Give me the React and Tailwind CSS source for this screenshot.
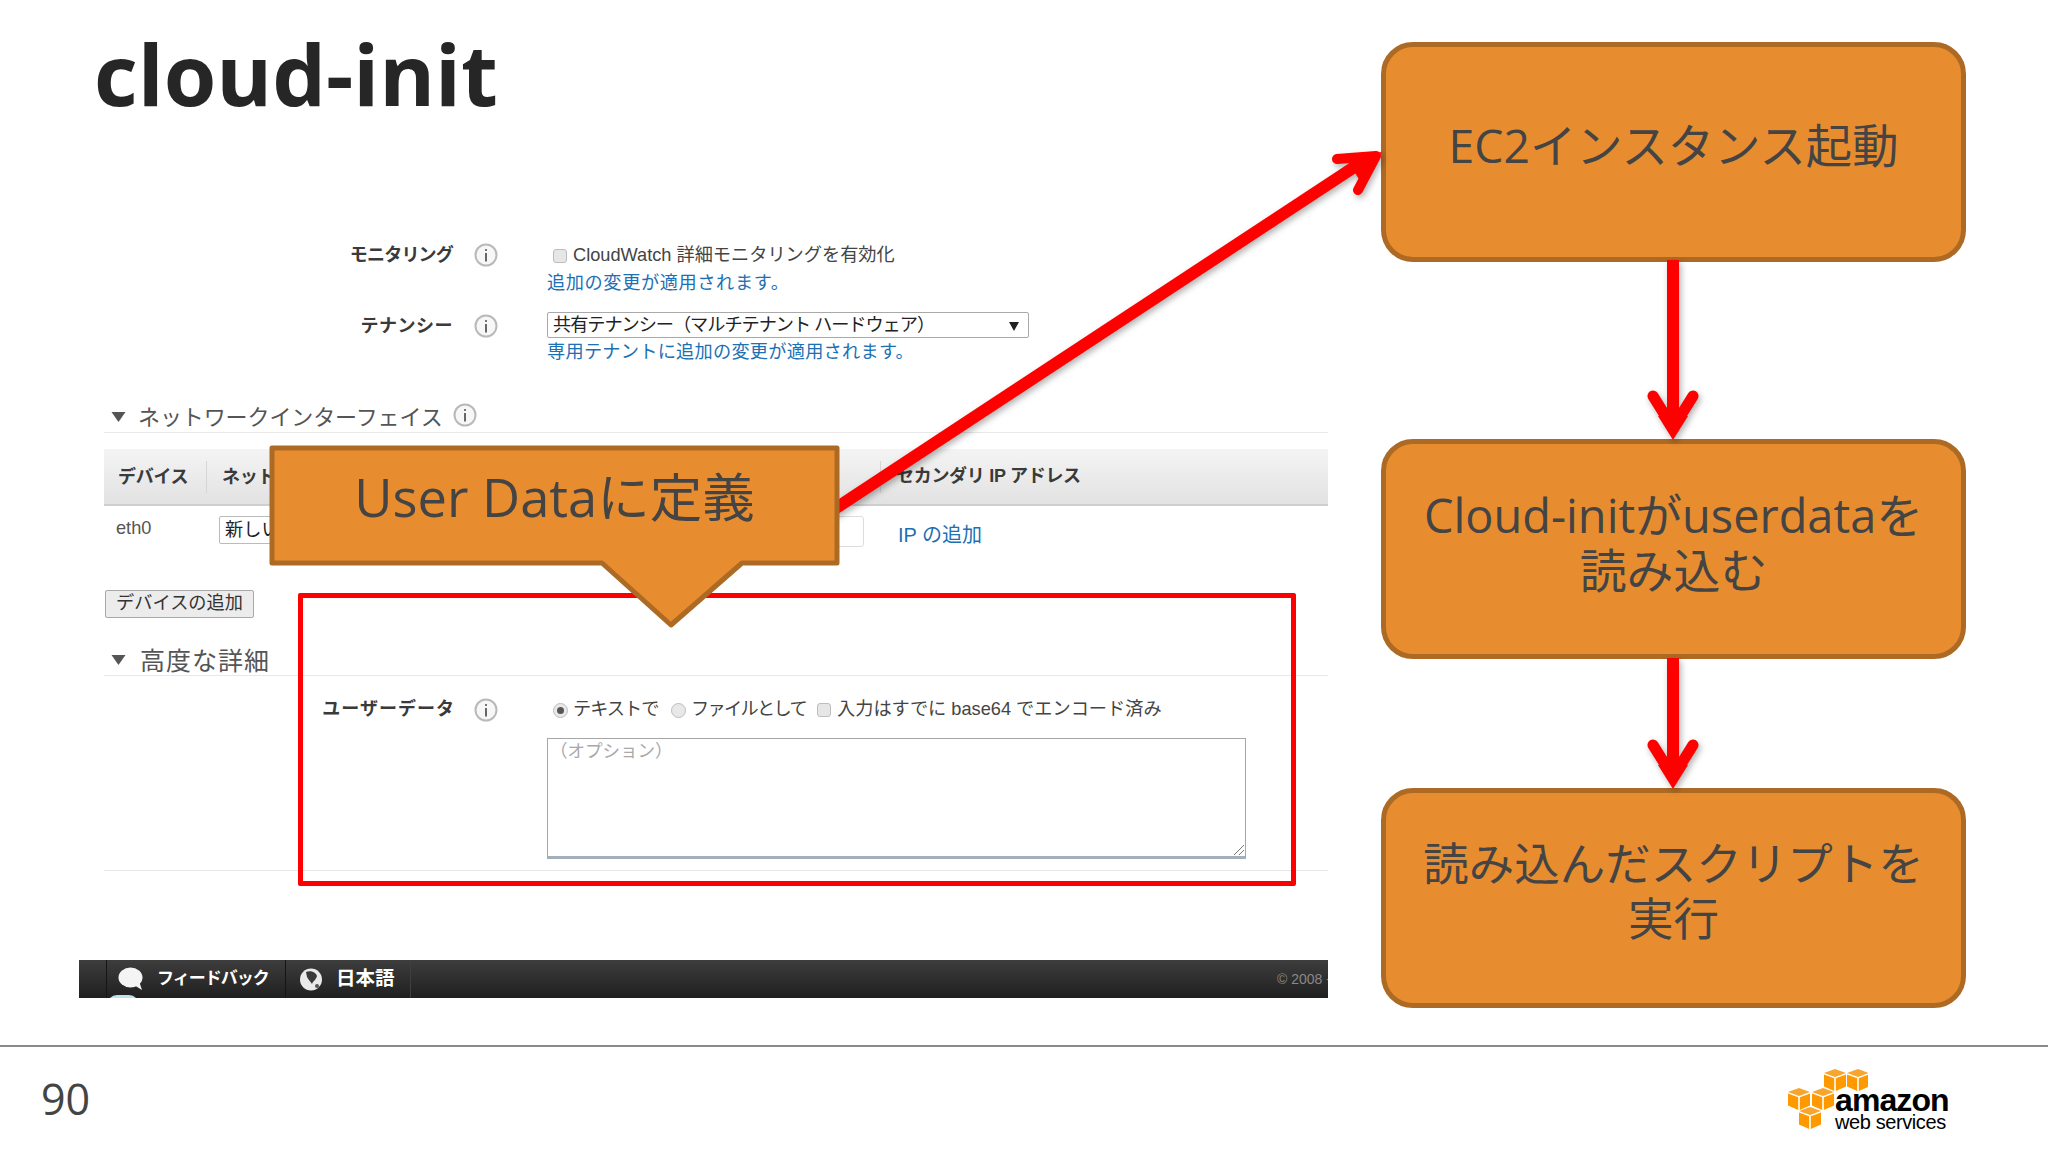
import React from "react";

const JP = "font-['Liberation_Sans','Noto_Sans_CJK_JP',sans-serif]";
const SLIDE = "font-['Open_Sans','Noto_Sans_CJK_JP',sans-serif]";

function Info({ className = "" }) {
  return (
    <svg viewBox="0 0 24 24" className={"w-6 h-6 shrink-0 " + className}>
      <circle cx="12" cy="12" r="10.5" fill="#f7f7f7" stroke="#b9b9b9" strokeWidth="2" />
      <rect x="11" y="6" width="2" height="2" fill="#777" />
      <rect x="11" y="10" width="2" height="8.5" fill="#666" />
    </svg>
  );
}

function Tri() {
  return (
    <svg viewBox="0 0 14 10" className="w-[15px] h-[10px] shrink-0">
      <polygon points="0,0 14,0 7,10" fill="#555" />
    </svg>
  );
}

function Check() {
  return <span className="inline-block w-[14px] h-[14px] rounded-[3px] border border-[#bdbdbd] bg-[#e6e6e6] shrink-0" />;
}

function Radio({ on }) {
  return (
    <span className="w-[15px] h-[15px] rounded-full border border-[#bdbdbd] bg-[#e8e8e8] shrink-0 flex items-center justify-center">
      {on && <span className="w-[7px] h-[7px] rounded-full bg-[#555]" />}
    </span>
  );
}

function Label({ children, w = "w-[375px]", track = "tracking-[-0.8px]" }) {
  return <div className={"text-right font-bold text-[18px] leading-[28px] text-[#3a3a3a] shrink-0 " + w + " " + track}>{children}</div>;
}

function Box({ lines, top }) {
  return (
    <div className={"w-[585px] h-[220px] shrink-0 rounded-[32px] border-[5px] border-[#ad6a24] bg-[#e88d2f] flex flex-col items-center leading-[55px] text-[#444] font-normal " + top}>
      {lines.map((l) => (
        <div key={l} className="whitespace-nowrap">{l}</div>
      ))}
    </div>
  );
}

function Cube({ x, y }) {
  return (
    <g transform={`translate(${x} ${y})`}>
      <polygon points="11,0 22,4 11,8 0,4" fill="#f7a52c" />
      <polygon points="0,5.5 10.2,9.3 10.2,22 0,17.5" fill="#ff9900" />
      <polygon points="11.8,9.3 22,5.5 22,17.5 11.8,22" fill="#ff9900" />
    </g>
  );
}

export default function App() {
  return (
    <div className={"relative w-[2048px] h-[1152px] overflow-hidden bg-white flex flex-col " + SLIDE}>
      <main className="h-[1045px] flex shrink-0">
        <section className="w-[1381px] shrink-0 pl-[78px] pr-[53px]">
          <h1 className="h-[240px] pl-[16px] pt-[20px] text-[85px] leading-[106px] font-bold text-[#262626]">cloud-init</h1>

          <div className={JP + " text-[#444] text-[18.2px]"}>
            <div className="flex h-[55px] pt-px">
              <Label>モニタリング</Label>
              <Info className="ml-[21px] mt-[2px]" />
              <div className="ml-[49px] pt-px">
                <div className="flex items-center h-[28px] pl-[6px] gap-[6px] whitespace-nowrap">
                  <Check />
                  <span>CloudWatch 詳細モニタリングを有効化</span>
                </div>
                <div className="h-[26px] leading-[26px] text-[#1c70b4] tracking-[0.6px]">追加の変更が適用されます。</div>
              </div>
            </div>

            <div className="flex mt-[17px] h-[52px]">
              <Label track="tracking-[0.5px]">テナンシー</Label>
              <Info className="ml-[21px] mt-[2px]" />
              <div className="ml-[49px]">
                <div className="w-[482px] h-[26px] border border-[#a9a9a9] rounded-[2px] flex items-center justify-between pl-[5px] pr-[9px] pt-px text-[#222] tracking-[-1.05px] whitespace-nowrap">
                  <span>共有テナンシー（マルチテナント ハードウェア）</span>
                  <svg viewBox="0 0 10 10" className="w-[10px] h-[10px]"><polygon points="0,1 10,1 5,10" fill="#222" /></svg>
                </div>
                <div className="h-[27px] leading-[29px] text-[#1c70b4] whitespace-nowrap tracking-[0.25px]">専用テナントに追加の変更が適用されます。</div>
              </div>
            </div>

            <div className="ml-[26px] mt-[38px] h-[31px] border-b border-[#e8e8e8] flex items-center text-[#555] text-[22px] tracking-[-0.1px]">
              <span className="ml-[7px]"><Tri /></span>
              <span className="ml-[12px]">ネットワークインターフェイス</span>
              <Info className="ml-[10px] -mt-[5px]" />
            </div>

            <div className="ml-[26px] mt-[16px] h-[57px] border-b-2 border-[#cfcfcf] bg-gradient-to-b from-[#f4f4f4] to-[#e2e2e2] flex items-center font-bold text-[18px] text-[#3a3a3a] tracking-[-0.3px]">
              <div className="w-[103px] h-[32px] leading-[32px] pl-[14px] border-r border-[#d5d5d5]">デバイス</div>
              <div className="w-[674px] h-[32px] leading-[32px] pl-[15px] border-r border-[#d5d5d5]">ネットワーク</div>
              <div className="pl-[15px]">セカンダリ IP アドレス</div>
            </div>

            <div className="ml-[26px] mt-[10px] flex h-[33px]">
              <div className="w-[115px] pl-[12px] leading-[24px] text-[#555]">eth0</div>
              <div className="w-[300px] h-[28px] border border-[#bbb] rounded-[2px] pl-[5px] leading-[26px] text-[#222] overflow-hidden whitespace-nowrap">新しいインターフェイス</div>
              <div className="ml-[100px] w-[245px] h-[31px] border border-[#ddd] rounded-[3px]" />
              <div className="ml-[34px] mt-[6px] text-[#1c70b4] leading-[26px] text-[20px] whitespace-nowrap">IP の追加</div>
            </div>

            <div className="ml-[27px] mt-[41px] w-[149px] h-[28px] rounded-[2px] border border-[#a8a8a8] bg-[#ececec] text-center leading-[25px] text-[#333] whitespace-nowrap">デバイスの追加</div>

            <div className="ml-[26px] mt-[27px] h-[31px] border-b border-[#e8e8e8] flex items-center text-[#555] text-[25px] tracking-[1px]">
              <span className="ml-[7px]"><Tri /></span>
              <span className="ml-[14px] mt-[3px]">高度な詳細</span>
            </div>

            <div className="flex mt-[19px] h-[28px]">
              <Label w="w-[377px]" track="tracking-[1px]">ユーザーデータ</Label>
              <Info className="ml-[19px] mt-[3px]" />
              <div className="ml-[49px] flex items-center pl-[6px] pt-[2px] whitespace-nowrap">
                <Radio on />
                <span className="ml-[5px] w-[98px] tracking-[-1px]">テキストで</span>
                <Radio />
                <span className="ml-[5px] w-[126px] tracking-[-1.7px]">ファイルとして</span>
                <Check />
                <span className="ml-[6px]">入力はすでに base64 でエンコード済み</span>
              </div>
            </div>

            <div className="ml-[469px] mt-[15px] w-[699px] h-[121px] relative border border-[#a6a6a6] border-b-[3px] border-b-[#a5aebb] pl-[2px] text-[#a8a8a8] leading-[24px] text-[17.5px]">
              （オプション）
              <svg viewBox="0 0 12 12" className="absolute right-0 bottom-0 w-3 h-3">
                <path d="M1 11 L11 1 M6 11 L11 6" stroke="#777" strokeWidth="1" fill="none" />
              </svg>
            </div>

            <div className="ml-[26px] mt-[11px] h-px bg-[#e8e8e8]" />

            <div className="relative mt-[89px] ml-px h-[38px] overflow-hidden bg-gradient-to-b from-[#3d3d3d] to-[#202020] flex text-white font-bold">
              <div className="w-[28px] border-r border-[#151515]" />
              <div className="w-[179px] border-r border-[#151515] flex items-center pl-[11px]">
                <svg viewBox="0 0 26 24" className="w-[26px] h-[24px]">
                  <ellipse cx="12.5" cy="10.5" rx="12" ry="10" fill="#f4f4f4" />
                  <polygon points="16,18 24,23 21,14" fill="#f4f4f4" />
                </svg>
                <span className="ml-[13px] whitespace-nowrap text-[17px] tracking-[-1px]">フィードバック</span>
              </div>
              <div className="w-[125px] border-r border-[#3f3f3f] flex items-center pl-[13px]">
                <svg viewBox="0 0 24 24" className="w-6 h-6">
                  <circle cx="12" cy="12.5" r="11" fill="#e9e9e9" />
                  <path d="M7 5 C11 3 17 5 18 9 C17 13 14 14 13 17 C11 14 9 12 8 10 Z" fill="#3a3a3a" />
                  <circle cx="18" cy="19" r="2" fill="#555" />
                </svg>
                <span className="ml-[13px] whitespace-nowrap text-[19.5px]">日本語</span>
              </div>
              <div className="ml-auto w-[51px] overflow-hidden whitespace-nowrap self-center text-[14px] font-normal text-[#888]">© 2008 - 2014</div>
              <span className="absolute left-[28px] -bottom-[7px] w-[32px] h-[10px] rounded-t-full bg-[#bfe3ee]" />
            </div>
          </div>
        </section>

        <aside className="w-[585px] shrink-0 flex flex-col pt-[42px]">
          <Box lines={["EC2インスタンス起動"]} top="pt-[71px] text-[46.3px]" />
          <div className="h-[177px] shrink-0" />
          <Box lines={["Cloud-initがuserdataを", "読み込む"]} top="pt-[44px] text-[46.9px]" />
          <div className="h-[129px] shrink-0" />
          <Box lines={["読み込んだスクリプトを", "実行"]} top="pt-[43px] text-[45.5px]" />
        </aside>
      </main>

      <footer className="flex-1 border-t-2 border-[#8a8a8a] flex items-center justify-between pl-[41px] pr-[100px]">
        <span className="text-[43px] text-[#444] leading-none -mt-[2px]">90</span>
        <div className="relative w-[160px] h-[64px] -mt-[2px]">
          <svg viewBox="0 0 80 64" className="absolute left-0 top-[2px] w-[80px] h-[64px]">
            <Cube x="36" y="0" />
            <Cube x="59" y="0" />
            <Cube x="0" y="19" />
            <Cube x="24" y="19" />
            <Cube x="11" y="38" />
          </svg>
          <div className="absolute left-[47px] top-[17px] font-['Liberation_Sans',sans-serif] font-bold text-[32px] leading-[32px] tracking-[-0.9px] text-black">amazon</div>
          <div className="absolute left-[47px] top-[44px] font-['Liberation_Sans',sans-serif] text-[20px] leading-[22px] tracking-[-0.4px] text-black whitespace-nowrap">web services</div>
        </div>
      </footer>

      {/* arrows over the slide */}
      <svg viewBox="0 0 2048 1152" className="absolute inset-0 w-[2048px] h-[1152px] pointer-events-none drop-shadow-[2px_3px_3px_rgba(0,0,0,0.3)]">
        <g stroke="#ff0000" fill="none" strokeLinecap="round" strokeLinejoin="round">
          <line x1="830" y1="512" x2="1368" y2="158" strokeWidth="12" strokeLinecap="butt" />
          <path d="M1337 159 L1376 156 L1358 190" strokeWidth="10" />
          <polygon points="1382,152 1345,157 1362,184" fill="#ff0000" stroke="none" />
          <line x1="1673" y1="260" x2="1673" y2="430" strokeWidth="12" strokeLinecap="butt" />
          <path d="M1653 396 L1673 428 L1693 396" strokeWidth="11" />
          <polygon points="1673,440 1658,416 1688,416" fill="#ff0000" stroke="none" />
          <line x1="1673" y1="658" x2="1673" y2="778" strokeWidth="12" strokeLinecap="butt" />
          <path d="M1653 745 L1673 777 L1693 745" strokeWidth="11" />
          <polygon points="1673,789 1658,765 1688,765" fill="#ff0000" stroke="none" />
        </g>
      </svg>

      {/* red highlight */}
      <div className="absolute left-[298px] top-[593px] w-[998px] h-[293px] border-[5px] border-[#ff0000] rounded-[2px]" />

      {/* callout */}
      <div className="absolute left-[269px] top-[445px] w-[571px] h-[186px]">
        <svg viewBox="0 0 571 186" className="absolute inset-0 w-[571px] h-[186px]">
          <polygon points="3,3 568,3 568,118 473,118 402,180 333,118 3,118" fill="#e88d2f" stroke="#ad6a24" strokeWidth="5" strokeLinejoin="round" />
        </svg>
        <div className="relative h-[105px] flex items-center justify-center text-[52.5px] leading-none text-[#444] font-normal">User Dataに定義</div>
      </div>
    </div>
  );
}
